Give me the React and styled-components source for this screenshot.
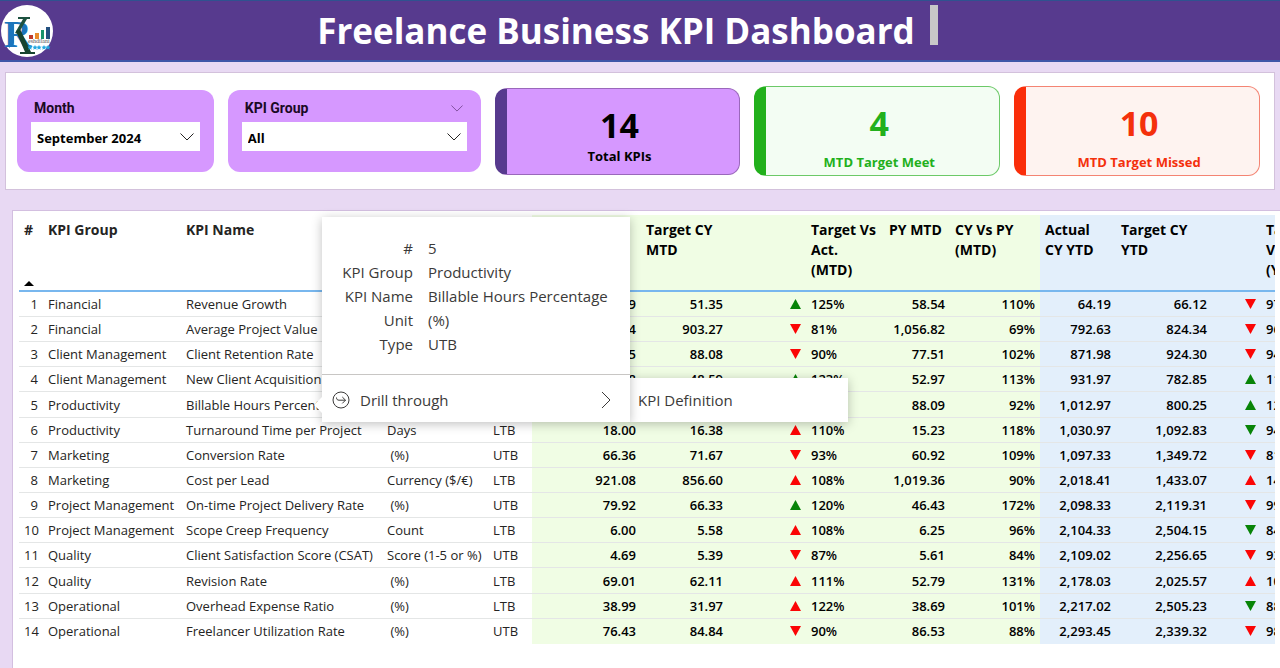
import React, { useState } from "react";
import styled, { createGlobalStyle } from "styled-components";

const COLUMNS = [
  { key: "id", label: "#", width: 24, align: "right", sorted: true },
  { key: "group", label: "KPI Group", width: 138 },
  { key: "name", label: "KPI Name", width: 201 },
  { key: "unit", label: "Unit", width: 106 },
  { key: "type", label: "Type", width: 44 },
  { key: "actualMtd", label: "Actual CY\nMTD", width: 109, align: "right", tone: "mtd" },
  { key: "targetMtd", label: "Target CY\nMTD", width: 87, align: "right", tone: "mtd" },
  { key: "trendMtd", label: "", width: 78, align: "right", tone: "mtd", trend: true },
  { key: "ratioMtd", label: "Target Vs\nAct.\n(MTD)", width: 78, tone: "mtd" },
  { key: "pyMtd", label: "PY MTD", width: 66, align: "right", tone: "mtd" },
  { key: "cyPyMtd", label: "CY Vs PY\n(MTD)", width: 90, align: "right", tone: "mtd" },
  { key: "actualYtd", label: "Actual\nCY YTD", width: 76, align: "right", tone: "ytd" },
  { key: "targetYtd", label: "Target CY\nYTD", width: 96, align: "right", tone: "ytd" },
  { key: "trendYtd", label: "", width: 49, align: "right", tone: "ytd", trend: true },
  { key: "ratioYtd", label: "Target\nVs Act.\n(YTD)", width: 77, tone: "ytd" },
];

const ROWS = [
  [1, "Financial", "Revenue Growth", " (%)", "UTB", "64.19", "51.35", "up good", "125%", "58.54", "110%", "64.19", "66.12", "down bad", "97%"],
  [2, "Financial", "Average Project Value", "Currency ($/€)", "UTB", "732.64", "903.27", "down bad", "81%", "1,056.82", "69%", "792.63", "824.34", "down bad", "96%"],
  [3, "Client Management", "Client Retention Rate", " (%)", "UTB", "79.35", "88.08", "down bad", "90%", "77.51", "102%", "871.98", "924.30", "down bad", "94%"],
  [4, "Client Management", "New Client Acquisition", "Count", "UTB", "59.98", "48.59", "up good", "123%", "52.97", "113%", "931.97", "782.85", "up good", "119%"],
  [5, "Productivity", "Billable Hours Percentage", " (%)", "UTB", "81.04", "68.10", "up good", "119%", "88.09", "92%", "1,012.97", "800.25", "up good", "127%"],
  [6, "Productivity", "Turnaround Time per Project", "Days", "LTB", "18.00", "16.38", "up bad", "110%", "15.23", "118%", "1,030.97", "1,092.83", "down good", "94%"],
  [7, "Marketing", "Conversion Rate", " (%)", "UTB", "66.36", "71.67", "down bad", "93%", "60.92", "109%", "1,097.33", "1,349.72", "down bad", "81%"],
  [8, "Marketing", "Cost per Lead", "Currency ($/€)", "LTB", "921.08", "856.60", "up bad", "108%", "1,019.36", "90%", "2,018.41", "1,433.07", "up bad", "141%"],
  [9, "Project Management", "On-time Project Delivery Rate", " (%)", "UTB", "79.92", "66.33", "up good", "120%", "46.43", "172%", "2,098.33", "2,119.31", "down bad", "99%"],
  [10, "Project Management", "Scope Creep Frequency", "Count", "LTB", "6.00", "5.58", "up bad", "108%", "6.25", "96%", "2,104.33", "2,504.15", "down good", "84%"],
  [11, "Quality", "Client Satisfaction Score (CSAT)", "Score (1-5 or %)", "UTB", "4.69", "5.39", "down bad", "87%", "5.61", "84%", "2,109.02", "2,256.65", "down bad", "93%"],
  [12, "Quality", "Revision Rate", " (%)", "LTB", "69.01", "62.11", "up bad", "111%", "52.79", "131%", "2,178.03", "2,025.57", "up bad", "108%"],
  [13, "Operational", "Overhead Expense Ratio", " (%)", "LTB", "38.99", "31.97", "up bad", "122%", "38.69", "101%", "2,217.02", "2,505.23", "down good", "88%"],
  [14, "Operational", "Freelancer Utilization Rate", " (%)", "UTB", "76.43", "84.84", "down bad", "90%", "86.53", "88%", "2,293.45", "2,339.32", "down bad", "98%"],
];

const DETAILS = [
  ["#", "5"],
  ["KPI Group", "Productivity"],
  ["KPI Name", "Billable Hours Percentage"],
  ["Unit", "(%)"],
  ["Type", "UTB"],
];

function Chevron({ size = 14 }) {
  return (
    <svg width={size} height={size / 2 + 1} viewBox="0 0 14 8" fill="none" stroke="currentColor">
      <path d="M.5.5 7 7 13.5.5" />
    </svg>
  );
}

function Trend({ value }) {
  const [direction, state] = value.split(" ");
  return (
    <svg width="11" height="10" viewBox="0 0 10 10" preserveAspectRatio="none" role="img" aria-label={direction} fill={state === "good" ? "#078407" : "#fb0505"}>
      <path d={direction === "up" ? "M5 0 10 10H0z" : "M0 0H10L5 10z"} />
    </svg>
  );
}

function BrandLogo() {
  return (
    <Logo viewBox="0 0 52 52" role="img" aria-label="Logo">
      <circle cx="26" cy="26" r="26" fill="#fff" />
      <LogoLetter x="3" y="42" fontSize="38" fill="#1b75bc">R</LogoLetter>
      <path d="M8 18v25l5-5V18z" fill="#1b75bc" />
      <path d="M17 12h12v2h-3L17 29l-3-1 8-14h-5z" fill="#1d5240" />
      <path d="m15 26 4-2 11 23h4v2H19v-2h5z" fill="#17442f" />
      <path d="M28 30h4v4h-4z" fill="#c0392b" />
      <path d="M34 28h4v6h-4z" fill="#e98b2a" />
      <path d="M40 25h3v9h-3z" fill="#17936b" />
      <path d="M45 22h4v12h-4z" fill="#23507f" />
      <LogoCaption x="27" y="38">eshdilani</LogoCaption>
      {[29, 34, 38, 43, 47].map((x) => (
        <path key={x} transform={`translate(${x} 40)`} d="m0 0 .8 1.600 1.700.1-1.300 1.200.5 1.800L0 3.800l-1.700.9.5-1.800-1.300-1.200 1.700-.1z" fill="#22a7e0" />
      ))}
    </Logo>
  );
}

function App() {
  const [month, setMonth] = useState("September 2024");
  const [group, setGroup] = useState("All");

  return (
    <Page>
      <GlobalStyle />
      <Header>
        <BrandLogo />
        <TitleWrap>
          <Title>Freelance Business KPI Dashboard</Title>
          <TitleMark />
        </TitleWrap>
      </Header>

      <Summary>
        <Slicer>
          <SlicerTop>
            <label htmlFor="month">Month</label>
          </SlicerTop>
          <SelectBox>
            <select id="month" value={month} onChange={(e) => setMonth(e.target.value)}>
              <option>September 2024</option>
            </select>
            <Chevron />
          </SelectBox>
        </Slicer>
        <Slicer>
          <SlicerTop>
            <label htmlFor="group">KPI Group</label>
            <Chevron size={12} />
          </SlicerTop>
          <SelectBox>
            <select id="group" value={group} onChange={(e) => setGroup(e.target.value)}>
              <option>All</option>
            </select>
            <Chevron />
          </SelectBox>
        </Slicer>
        <Stat $bar="#573a8e" $line="#9a68bb" $bg="#d698ff" $color="#000" $compact>
          <strong>14</strong>
          <span>Total KPIs</span>
        </Stat>
        <Stat $bar="#22b01c" $line="#6cc968" $bg="#f3fdf3" $color="#22b01c">
          <strong>4</strong>
          <span>MTD Target Meet</span>
        </Stat>
        <Stat $bar="#fa2e0a" $line="#f48473" $bg="#fef3f0" $color="#f4300c">
          <strong>10</strong>
          <span>MTD Target Missed</span>
        </Stat>
      </Summary>

      <Report>
        <TableScroll>
          <Table>
            <colgroup>
              {COLUMNS.map((c) => (
                <Col key={c.key} $width={c.width} />
              ))}
            </colgroup>
            <thead>
              <tr>
                {COLUMNS.map((c) => (
                  <HeadCell key={c.key} $tone={c.tone} aria-label={c.trend ? "Trend" : undefined}>
                    <HeadInner>
                      {c.label}
                      {c.sorted && (
                        <svg width="10" height="5" viewBox="0 0 10 5">
                          <path d="M5 0 10 5H0z" />
                        </svg>
                      )}
                    </HeadInner>
                  </HeadCell>
                ))}
              </tr>
            </thead>
            <tbody>
              {ROWS.map((row) => (
                <Row key={row[0]}>
                  {COLUMNS.map((c, i) => (
                    <Cell key={c.key} $align={c.align} $tone={c.tone}>
                      {c.trend ? <Trend value={row[i]} /> : row[i]}
                    </Cell>
                  ))}
                </Row>
              ))}
            </tbody>
          </Table>
        </TableScroll>

        <ContextMenu>
          <MenuCard>
            <Details>
              {DETAILS.map(([name, value]) => (
                <React.Fragment key={name}>
                  <dt>{name}</dt>
                  <dd>{value}</dd>
                </React.Fragment>
              ))}
            </Details>
            <MenuButton>
              <svg width="18" height="18" viewBox="0 0 18 18" fill="none" stroke="currentColor">
                <circle cx="9" cy="9" r="8" />
                <path d="M4.500 6.500c0 2 1 2.700 2.500 2.700h6.500M10.300 6l3.200 3.200-3.200 3.200" />
              </svg>
              <span>Drill through</span>
              <svg width="10" height="18" viewBox="0 0 10 18" fill="none" stroke="currentColor">
                <path d="m1 1 8 8-8 8" />
              </svg>
            </MenuButton>
          </MenuCard>
          <SubMenu>
            <button>KPI Definition</button>
          </SubMenu>
        </ContextMenu>
      </Report>
    </Page>
  );
}

export default App;

const GlobalStyle = createGlobalStyle`
  * {
    box-sizing: border-box;
  }
  body {
    margin: 0;
    background: #e8d9f3;
    font-family: "Open Sans", "Noto Sans", sans-serif;
    font-size: 13px;
    color: #252423;
  }
  button, select {
    font: inherit;
    color: inherit;
  }
`;
const Page = styled.div`
  display: flex;
  flex-direction: column;
  min-height: 100vh;
  overflow: hidden;
`;
const Header = styled.header`
  display: flex;
  align-items: center;
  height: 62px;
  padding: 0 78px 0 1px;
  background: #573a8e;
  border-top: 1px solid #2f528f;
  border-bottom: 2px solid #3f56a8;
`;
const Logo = styled.svg`
  flex: none;
  width: 52px;
  height: 52px;
`;
const LogoLetter = styled.text`
  font-family: "Liberation Serif", serif;
  font-weight: 700;
`;
const LogoCaption = styled.text`
  font-family: "Liberation Serif", serif;
  font-size: 6px;
  fill: #555;
`;
const TitleWrap = styled.div`
  display: flex;
  flex: 1;
  justify-content: center;
  gap: 15px;
`;
const Title = styled.h1`
  margin: 0;
  color: #fff;
  font-size: 35px;
  line-height: 52px;
  font-weight: 700;
  white-space: nowrap;
`;
const TitleMark = styled.span`
  width: 8px;
  height: 40px;
  background: #c8c8c8;
`;
const Summary = styled.section`
  display: grid;
  grid-template-columns: 197fr 253fr 246fr 246fr 246fr;
  align-items: center;
  gap: 14px;
  height: 118px;
  margin: 10px 5px 20px;
  padding: 0 14px 0 11px;
  background: #fff;
  border: 1px solid #d3c1dc;
`;
const Slicer = styled.div`
  height: 82px;
  padding: 4px 14px;
  border-radius: 12px;
  background: #d698ff;
`;
const SlicerTop = styled.div`
  display: flex;
  align-items: center;
  justify-content: space-between;
  height: 28px;
  padding: 0 4px 0 3px;

  label {
    font-family: Roboto, sans-serif;
    font-size: 14px;
    font-weight: 700;
    color: #1a0a24;
  }
  svg {
    color: #74458f;
  }
`;
const SelectBox = styled.div`
  display: grid;
  align-items: center;
  background: #fff;

  select,
  svg {
    grid-area: 1 / 1;
  }
  select {
    appearance: none;
    width: 100%;
    height: 29px;
    padding: 2px 24px 0 6px;
    border: 0;
    background: transparent;
    font-weight: 700;
    color: #000;
  }
  svg {
    justify-self: end;
    margin-right: 6px;
    pointer-events: none;
  }
`;
const Stat = styled.div`
  display: flex;
  flex-direction: column;
  align-items: center;
  height: ${(p) => (p.$compact ? 87 : 90)}px;
  padding: 15px 7px 0 0;
  border: 1px solid ${(p) => p.$line};
  border-left: 12px solid ${(p) => p.$bar};
  border-radius: 12px;
  background: ${(p) => p.$bg};
  color: ${(p) => p.$color};

  strong {
    font-size: 34px;
    line-height: 42px;
  }
  span {
    margin-top: ${(p) => (p.$compact ? 0 : 8)}px;
    font-weight: 700;
    line-height: 20px;
  }
`;
const Report = styled.section`
  position: relative;
  flex: 1;
  margin-left: 12px;
  padding: 4px 5px 20px 6px;
  background: #fff;
  border: solid #d3bfe0;
  border-width: 1px 0 0 1px;
`;
const TableScroll = styled.div`
  overflow: hidden;
`;
const Table = styled.table`
  table-layout: fixed;
  width: 1319px;
  border-collapse: separate;
  border-spacing: 0;
`;
const Col = styled.col`
  width: ${(p) => p.$width}px;
`;
const tones = { mtd: "#f0fde4", ytd: "#e3effb" };
const HeadCell = styled.th`
  height: 77px;
  padding: 5px 5px 4px;
  border-bottom: 2px solid #78b7ee;
  background: ${(p) => tones[p.$tone] || "#fff"};
  color: ${(p) => (p.$tone ? "#000" : "#252423")};
  font-size: 14px;
  line-height: 20px;
  font-weight: 700;
  text-align: left;
  vertical-align: top;
  white-space: pre;
`;
const HeadInner = styled.div`
  display: flex;
  flex-direction: column;
  justify-content: space-between;
  height: 66px;
`;
const Row = styled.tr`
  height: 25px;

  &:nth-child(7n + 5) {
    height: 26px;
  }
`;
const Cell = styled.td`
  padding: 0 5px;
  border-bottom: 1px solid #e4e6e6;
  background: ${(p) => tones[p.$tone] || "#fff"};
  color: ${(p) => (p.$tone ? "#000" : "#252423")};
  font-weight: ${(p) => (p.$tone ? 600 : 500)};
  line-height: 20px;
  text-align: ${(p) => p.$align || "left"};
  white-space: pre;

  tr:last-child > & {
    border-bottom-color: transparent;
  }
`;
const ContextMenu = styled.div`
  position: absolute;
  top: 6px;
  left: 309px;
  display: flex;
  align-items: flex-end;
  color: #3b3a39;
  font-size: 15px;

  button {
    border: 0;
    background: #fff;
    cursor: pointer;
  }
`;
const MenuCard = styled.div`
  z-index: 1;
  width: 308px;
  background: #fff;
  box-shadow: 0 2px 10px rgba(0, 0, 0, 0.25);

  &::before {
    content: "";
    position: absolute;
    left: -5px;
    bottom: 10px;
    width: 14px;
    height: 14px;
    background: #fff;
    transform: rotate(45deg);
  }
`;
const Details = styled.dl`
  display: grid;
  grid-template-columns: 91px 1fr;
  column-gap: 15px;
  margin: 0;
  padding: 19px 0 18px;
  border-bottom: 1px solid #c8c6c4;
  line-height: 24px;

  dt {
    text-align: right;
  }
  dd {
    margin: 0;
    white-space: nowrap;
  }
`;
const MenuButton = styled.button`
  position: relative;
  display: flex;
  align-items: center;
  gap: 10px;
  width: 100%;
  height: 47px;
  padding: 3px 19px 0 10px;
  text-align: left;

  span {
    flex: 1;
  }
`;
const SubMenu = styled.div`
  box-shadow: 0 2px 10px rgba(0, 0, 0, 0.25);

  button {
    width: 218px;
    height: 44px;
    padding: 0 8px;
    text-align: left;
  }
`;
